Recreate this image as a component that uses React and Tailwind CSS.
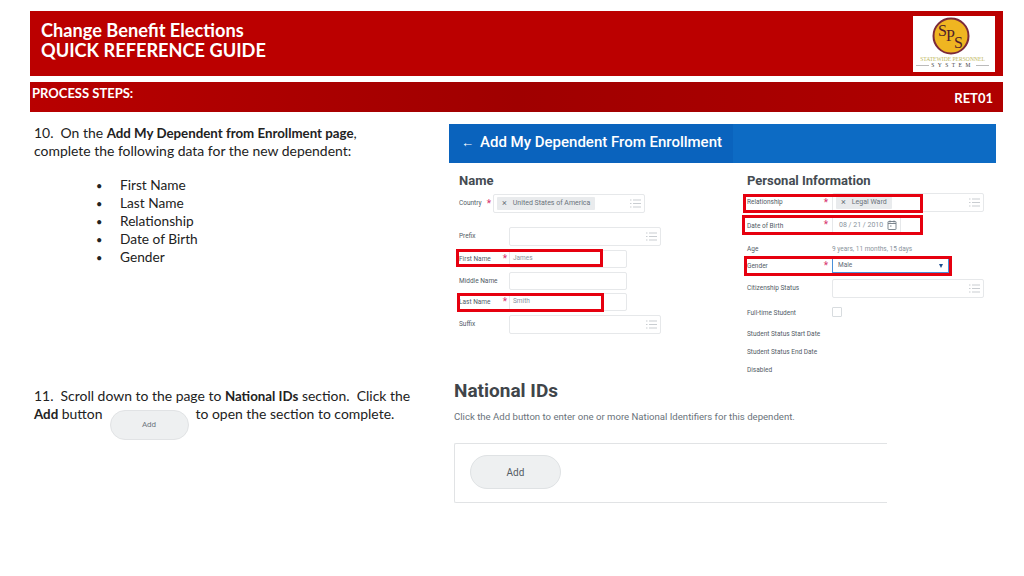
import React from "react";

const Tick = () => (
  <svg width="11" height="9" viewBox="0 0 11 9" className="shrink-0" fill="none" stroke="#c9cdd1" strokeWidth="1">
    <path d="M0 1h1.5M3 1h8M0 4.5h1.5M3 4.5h8M0 8h1.5M3 8h8" />
  </svg>
);

const Label = ({ w, children, req, ast, nudge = 0 }) => (
  <div className="flex items-center shrink-0 text-[6.5px] text-[#525c66]" style={{ width: w }}>
    <span className="flex-1" style={{ transform: `translateY(${nudge}px)` }}>{children}</span>
    {req && <span className="text-[10px] leading-none text-[#d6336c]" style={{ marginRight: ast }}>*</span>}
  </div>
);

const Box = ({ className = "", children }) => (
  <div className={`flex items-center h-full rounded-[2px] border border-[#e6e8ea] bg-white px-[3px] ${className}`}>{children}</div>
);

const Chip = ({ children }) => (
  <span className="flex items-center gap-[6px] h-[13px] bg-[#e9ebed] rounded-[1px] px-[5px] text-[7px] text-[#6a737b] whitespace-nowrap">
    <span className="text-[9px] leading-none">×</span>{children}
  </span>
);

const Highlight = ({ className }) => (
  <div className={`absolute border-[3px] border-[#e6000f] ${className}`} />
);

const Logo = () => (
  <div className="flex flex-col items-center w-[82px] h-[56px] bg-white pt-[1px]">
    <svg width="38" height="38" viewBox="0 0 38 38" className="mr-[6px]">
      <circle cx="19" cy="19" r="17.5" fill="#efb521" stroke="#7b2a3a" strokeWidth="2" />
      <text x="6" y="19" fontFamily="Liberation Serif, serif" fontSize="16" fill="#4f1d2a">S</text>
      <text x="14" y="24" fontFamily="Liberation Serif, serif" fontSize="16" fill="#4f1d2a">P</text>
      <text x="22" y="31" fontFamily="Liberation Serif, serif" fontSize="16" fill="#4f1d2a">S</text>
    </svg>
    <div className="mt-[1px] mr-[3px] text-[5.6px] leading-[6px] text-[#bdb75c] font-['Liberation_Serif',serif] whitespace-nowrap">STATEWIDE PERSONNEL</div>
    <div className="flex items-center gap-[2px] mt-[1px] mr-[3px] text-[5.5px] leading-[5px] text-[#444] font-['Liberation_Serif',serif]">
      <span className="w-[13px] h-px bg-[#bbb]" />
      <span className="tracking-[3.5px]">SYSTEM</span>
      <span className="w-[13px] h-px bg-[#bbb]" />
    </div>
  </div>
);

const Bullet = ({ children }) => (
  <li className="flex h-[18px] items-center">
    <span className="w-[24px] text-[11px] leading-none">•</span>
    {children}
  </li>
);

export default function App() {
  return (
    <div className="relative w-[1024px] h-[576px] overflow-hidden bg-white font-['Lato',sans-serif] pl-[30px] pt-[11px] pr-[21px]">
      <header className="flex items-center justify-between h-[65px] bg-[#bb0000] pl-[11px] pr-[8px] text-white">
        <div className="font-bold text-[18.2px] leading-[20px] mt-[-7px]">
          <div>Change Benefit Elections</div>
          <div>QUICK REFERENCE GUIDE</div>
        </div>
        <Logo />
      </header>

      <div className="flex justify-between h-[30px] mt-[6px] pl-[2px] pr-[10px] bg-gradient-to-r from-[#b80000] via-[#a00000] to-[#b00000] text-white font-bold text-[13px]">
        <span className="pt-[2px]">PROCESS STEPS:</span>
        <span className="pt-[7px]">RET01</span>
      </div>

      <main className="flex">
        <section className="w-[419px] shrink-0 pl-[4px] pt-[12px] text-[13.95px] leading-[18px] text-[#222]">
          <p>10.&nbsp; On the <b className="text-[13.3px]">Add My Dependent from Enrollment page</b>,<br />complete the following data for the new dependent:</p>
          <ul className="mt-[16px] ml-[62px] text-[13.7px]">
            <Bullet>First Name</Bullet>
            <Bullet>Last Name</Bullet>
            <Bullet>Relationship</Bullet>
            <Bullet>Date of Birth</Bullet>
            <Bullet>Gender</Bullet>
          </ul>
          <p className="mt-[121px]">
            11.&nbsp; Scroll down to the page to <b className="text-[13.3px]">National IDs</b> section.&nbsp; Click the<br />
            <b className="text-[13.3px]">Add</b> button
            <span className="inline-flex align-top items-center justify-center w-[79px] h-[30px] mt-[5px] -mb-[17px] ml-[7px] mr-[7px] rounded-full bg-[#eef0f1] border border-[#e1e3e5] font-['Roboto',sans-serif] text-[8px] text-[#6c757d]">Add</span>
            to open the section to complete.
          </p>
        </section>

        <section className="relative flex-1 pt-[12px] font-['Roboto',sans-serif]">
          <div className="flex items-center w-[547px] h-[39px] bg-gradient-to-r from-[#0a63bd] from-[52%] to-[#0d6bc4] to-[52%] text-white pl-[12px] gap-[6px] pb-[2px]">
            <span className="text-[13px] leading-none">←</span>
            <span className="text-[15px] font-medium whitespace-nowrap">Add My Dependent From Enrollment</span>
          </div>

          <div className="flex pl-[10px] text-[#5e6a75]">
            <div className="w-[288px]">
              <h3 className="mt-[10px] h-[16px] leading-[16px] text-[13px] font-bold text-[#444b52]">Name</h3>
              <div className="flex h-[19px] mt-[5px] items-center">
                <Label w={34} req ast={2}>Country</Label>
                <Box className="w-[152px] justify-between"><Chip>United States of America</Chip><Tick /></Box>
              </div>
              <div className="flex h-[19px] mt-[14px] items-center">
                <Label w={50}>Prefix</Label>
                <Box className="w-[152px] justify-end"><Tick /></Box>
              </div>
              <div className="flex h-[18px] mt-[4px] items-center">
                <Label w={50} req ast={2} nudge={1}>First Name</Label>
                <Box className="w-[118px] text-[6.5px] text-[#8a949d]">James</Box>
              </div>
              <div className="flex h-[18px] mt-[4px] items-center">
                <Label w={50} nudge={1}>Middle Name</Label>
                <Box className="w-[118px]" />
              </div>
              <div className="flex h-[18px] mt-[3px] items-center">
                <Label w={50} req ast={2} nudge={1}>Last Name</Label>
                <Box className="w-[118px] text-[6.5px] text-[#8a949d]">Smith</Box>
              </div>
              <div className="flex h-[19px] mt-[4px] items-center">
                <Label w={50}>Suffix</Label>
                <Box className="w-[152px] justify-end"><Tick /></Box>
              </div>
            </div>

            <div className="w-[237px]">
              <h3 className="mt-[10px] h-[16px] leading-[16px] text-[13px] font-bold text-[#444b52]">Personal Information</h3>
              <div className="flex h-[19px] mt-[4px] items-center">
                <Label w={85} req ast={4}>Relationship</Label>
                <Box className="w-[152px] justify-between"><Chip>Legal Ward</Chip><Tick /></Box>
              </div>
              <div className="flex h-[18px] mt-[4px] items-center">
                <Label w={85} req ast={4} nudge={2}>Date of Birth</Label>
                <Box className="w-[69px] justify-between text-[7px] text-[#8a949d]">
                  <span className="pl-[3px] whitespace-nowrap">08 / 21 / 2010</span>
                  <svg width="10" height="10" viewBox="0 0 10 10" fill="none" stroke="#6f7a84" strokeWidth="0.9" className="shrink-0">
                    <rect x="1" y="1.5" width="8" height="8" rx="0.5" />
                    <path d="M1 3.5h8M3 0.5v2M7 0.5v2M3 6h1.5" />
                  </svg>
                </Box>
              </div>
              <div className="flex h-[16px] mt-[8px] items-center">
                <Label w={85}>Age</Label>
                <span className="text-[6.5px] text-[#8a949d]">9 years, 11 months, 15 days</span>
              </div>
              <div className="flex h-[15px] mt-[0px] items-center">
                <Label w={85} req ast={4} nudge={1}>Gender</Label>
                <div className="flex items-center justify-between w-[117px] h-full border border-[#4a90d9] px-[5px] text-[6.5px]">
                  <span>Male</span>
                  <span className="w-0 h-0 border-x-[2.5px] border-x-transparent border-t-[4px] border-t-[#1d4f91]" />
                </div>
              </div>
              <div className="flex h-[19px] mt-[6px] items-center">
                <Label w={85}>Citizenship Status</Label>
                <Box className="w-[152px] justify-end"><Tick /></Box>
              </div>
              <div className="flex h-[18px] mt-[5px] items-center">
                <Label w={85} nudge={2}>Full-time Student</Label>
                <span className="w-[10px] h-[10px] rounded-[1px] border border-[#d8dcdf]" />
              </div>
              <div className="flex h-[16px] mt-[6px] items-center"><Label w={85}>Student Status Start Date</Label></div>
              <div className="flex h-[16px] mt-[2px] items-center"><Label w={85}>Student Status End Date</Label></div>
              <div className="flex h-[16px] mt-[2px] items-center"><Label w={85}>Disabled</Label></div>
            </div>
          </div>

          <div className="ml-[5px] w-[433px]">
            <h2 className="mt-[-1px] h-[26px] leading-[26px] text-[19px] font-bold text-[#3f454a]">National IDs</h2>
            <p className="mt-[6px] h-[14px] leading-[14px] text-[9.6px] text-[#6a737b] whitespace-nowrap">Click the Add button to enter one or more National Identifiers for this dependent.</p>
            <div className="mt-[19px] h-[60px] pt-[11px] pl-[15px] border-y border-l border-[#e1e3e5] rounded-l-[2px]">
              <div className="flex items-center justify-center w-[91px] h-[34px] rounded-full bg-[#eef0f1] border border-[#dfe2e4] text-[10px] text-[#555d64]">Add</div>
            </div>
          </div>

          <Highlight className="left-[7px] top-[137px] w-[147px] h-[18px]" />
          <Highlight className="left-[8px] top-[181px] w-[147px] h-[19px]" />
          <Highlight className="left-[294px] top-[82px] w-[180px] h-[19px]" />
          <Highlight className="left-[293px] top-[103px] w-[181px] h-[20px]" />
          <Highlight className="left-[295px] top-[144px] w-[208px] h-[20px]" />
        </section>
      </main>
    </div>
  );
}
